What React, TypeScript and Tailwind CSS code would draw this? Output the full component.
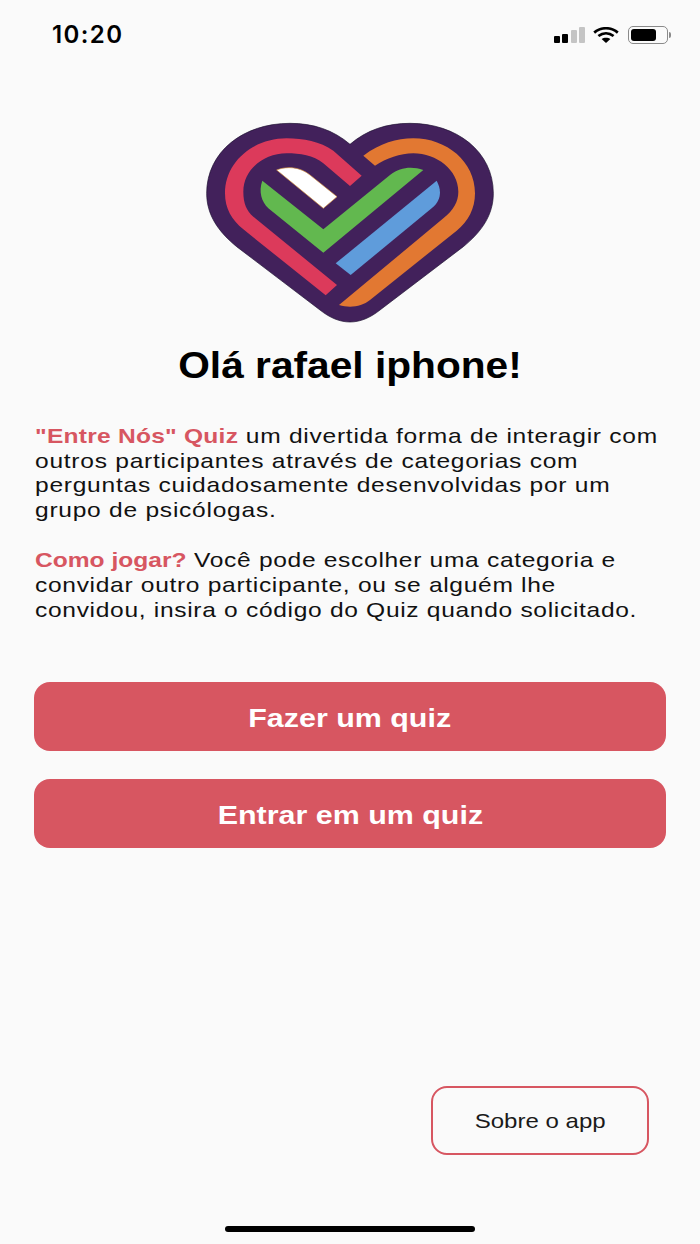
const Logo = () => (
	<svg viewBox="0 0 960 675" className="w-[320px] h-[225px]">
		<path
			d="M480 103C430 60 370 40 300 40C160 40 50 125 50 250C50 315 85 365 140 410L390 600C450 648 510 648 570 600L820 410C875 365 910 315 910 250C910 125 800 40 660 40C590 40 530 60 480 103Z"
			fill="#42215b"
			stroke="#1d1030"
			strokeWidth="2"
		/>
		<path
			d="M515 197L430 122C390 95 340 85 290 85C190 85 105 155 105 250C105 295 125 330 160 358L407 556L441 525L190 320C170 302 160 280 160 245C160 180 220 130 290 130C330 130 370 135 400 160L480 228Z"
			fill="#dc3a5b"
		/>
		<path
			d="M520 137C570 100 620 85 670 85C770 85 855 155 855 250C855 295 835 335 800 362L540 570C515 590 480 595 447 585L760 325C790 300 805 275 805 245C805 180 740 130 670 130C630 130 590 145 555 167Z"
			fill="#e27832"
		/>
		<path
			d="M217 212L400 358L600 195C630 172 665 168 700 180L400 428L235 295C215 275 205 245 217 212Z"
			fill="#62b84f"
		/>
		<path
			d="M740 212C755 240 755 270 725 295L482 495L437 460Z"
			fill="#5f9cdb"
		/>
		<path
			d="M260 180C290 168 330 170 360 195L441 260L400 295Z"
			fill="#ffffff"
			stroke="#d9953f"
			strokeWidth="2"
		/>
	</svg>
);

const StatusIcons = () => (
	<div className="flex items-center">
		<div className="flex items-end gap-[2.5px]">
			<div className="w-[6px] h-[7px] bg-black rounded-[1px]" />
			<div className="w-[6px] h-[9px] bg-black rounded-[1px]" />
			<div className="w-[6px] h-[13px] bg-[#c4c4c4] rounded-[1px]" />
			<div className="w-[6px] h-[16px] bg-[#c4c4c4] rounded-[1px]" />
		</div>
		<svg viewBox="0 0 26 16" className="w-[26px] h-[16px] ml-[8px]">
			<path
				d="M1.2 5.6C8 -.2 18 -.2 24.8 5.6M5.4 9C10 5.4 16 5.4 20.6 9"
				fill="none"
				stroke="#000"
				strokeWidth="2.7"
			/>
			<path d="M13 16L8.6 12C11 10.2 15 10.2 17.4 12Z" fill="#000" />
		</svg>
		<div className="flex items-center gap-[1px] ml-[9px]">
			<div className="w-[40px] h-[18px] rounded-[5px] border border-[#8a8a8a] p-[2px]">
				<div className="w-[25px] h-full bg-black rounded-[3px]" />
			</div>
			<div className="w-[2px] h-[6px] bg-[#8a8a8a] rounded-r-sm" />
		</div>
	</div>
);

export default function App() {
	return (
		<div className="w-[700px] h-[1244px] bg-[#fafafa] flex flex-col font-['Liberation_Sans',sans-serif] text-black overflow-hidden">
			<div className="h-[69px] pl-[52px] pr-[29px] flex items-center justify-between shrink-0">
				<span className="text-[24px] font-semibold tracking-[1.4px] font-['Inter',sans-serif]">
					10:20
				</span>
				<StatusIcons />
			</div>

			<div className="flex justify-center mt-[41px] h-[225px] shrink-0">
				<Logo />
			</div>

			<h1 className="text-center text-[36px] leading-[44px] font-bold mt-[9px] scale-x-[1.13]">
				Olá rafael iphone!
			</h1>

			<div className="mt-[36px] ml-[35px] text-[21px] leading-[24.6px] text-[#111111] scale-x-[1.17] origin-left whitespace-nowrap">
				<p className="tracking-[0.63px]">
					<span className="text-[#d75661] font-bold tracking-[0.2px]">
						"Entre Nós" Quiz
					</span>{" "}
					um divertida forma de interagir com
					<br />
					outros participantes através de categorias com
					<br />
					perguntas cuidadosamente desenvolvidas por um
					<br />
					grupo de psicólogas.
				</p>
				<p className="mt-[26px] tracking-[0.58px]">
					<span className="text-[#d75661] font-bold tracking-normal">
						Como jogar?
					</span>{" "}
					Você pode escolher uma categoria e
					<br />
					convidar outro participante, ou se alguém lhe
					<br />
					convidou, insira o código do Quiz quando solicitado.
				</p>
			</div>

			<div className="mt-[60px] mx-[34px] flex flex-col gap-[28px]">
				<button className="h-[69px] pt-[3px] rounded-[16px] bg-[#d75661] text-white text-[26px] font-bold">
					<span className="inline-block scale-x-[1.17]">Fazer um quiz</span>
				</button>
				<button className="h-[69px] pt-[3px] rounded-[16px] bg-[#d75661] text-white text-[26px] font-bold">
					<span className="inline-block scale-x-[1.17]">Entrar em um quiz</span>
				</button>
			</div>

			<div className="mt-auto mr-[51px] flex justify-end">
				<button className="w-[218px] h-[69px] rounded-[16px] border-2 border-[#d75661] text-[21px] text-[#1a1a1a]">
					<span className="inline-block scale-x-[1.145]">Sobre o app</span>
				</button>
			</div>

			<div className="mt-[71px] mb-[12px] mx-auto w-[250px] h-[6px] rounded-full bg-black shrink-0" />
		</div>
	);
}
